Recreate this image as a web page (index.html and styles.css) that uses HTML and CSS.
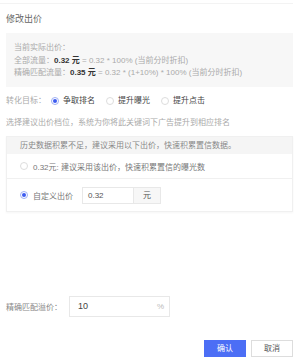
FILE: index.html
```html
<!DOCTYPE html>
<html>
<head>
<meta charset="utf-8">
<link rel="stylesheet" href="styles.css">
</head>
<body>
<div class="modal">
  <div class="topline"></div>
  <div class="title">修改出价</div>
  <div class="current">
    <div class="line">当前实际出价：</div>
    <div class="line">全部流量：<b>0.32 元</b> = 0.32 * 100% (当前分时折扣)</div>
    <div class="line">精确匹配流量：<b>0.35 元</b> = 0.32 * (1+10%) * 100% (当前分时折扣)</div>
  </div>
  <div class="goal">
    <span class="label">转化目标：</span>
    <span class="opt"><span class="radio on"></span><span class="dark">争取排名</span></span>
    <span class="opt"><span class="radio"></span><span class="dark">提升曝光</span></span>
    <span class="opt"><span class="radio"></span><span class="dark">提升点击</span></span>
  </div>
  <div class="hint">选择建议出价档位，系统为你将此关键词下广告提升到相应排名</div>
  <div class="options">
    <div class="ohead">历史数据积累不足，建议采用以下出价，快速积累置信数据。</div>
    <div class="orow">
      <span class="radio"></span><span class="dark2">0.32元: 建议采用该出价，快速积累置信的曝光数</span>
    </div>
    <div class="orow custom">
      <span class="radio on"></span><span class="dark2">自定义出价</span>
      <span class="inp"><span class="val">0.32</span><span class="unit">元</span></span>
    </div>
  </div>
  <div class="premium">
    <span class="label">精确匹配溢价：</span>
    <span class="pinp"><span class="val">10</span><span class="pct">%</span></span>
  </div>
  <div class="actions">
    <span class="btn primary">确认</span>
    <span class="btn">取消</span>
  </div>
</div>
</body>
</html>
```

FILE: styles.css
```css
html, body {
  margin: 0;
  padding: 0;
  background: #fff;
}
body {
  font-family: "Liberation Sans", "Noto Sans CJK SC", sans-serif;
  font-size: 8px;
  color: #999;
  width: 301px;
  height: 359px;
  overflow: hidden;
}
.modal {
  padding: 0 8px 0 6px;
}
.topline {
  margin: 3px -8px 0 -6px;
  width: 293px;
  border-top: 1px solid #f3f3f3;
}
.title {
  margin-top: 9px;
  height: 12px;
  line-height: 12px;
  font-size: 9px;
  color: #666;
}
.current {
  margin-top: 8px;
  background: #f7f7f7;
  padding: 9px 8px 8px;
  height: 37px;
}
.line {
  height: 12.5px;
  line-height: 12.5px;
  color: #aaa;
  white-space: nowrap;
}
.line b {
  color: #333;
  font-weight: bold;
}
.goal {
  margin-top: 8px;
  height: 12px;
  line-height: 12px;
  display: flex;
  align-items: center;
}
.goal .label {
  width: 45px;
  color: #aaa;
}
.opt {
  display: inline-flex;
  align-items: center;
  margin-right: 11px;
}
.dark { color: #444; margin-left: 4px; }
.dark2 { color: #777; margin-left: 5px; }
.radio {
  width: 6px;
  height: 6px;
  border: 1px solid #ddd;
  border-radius: 50%;
  box-sizing: content-box;
  display: inline-block;
  background: #fff;
  position: relative;
}
.radio.on {
  border-color: #9fb0f5;
}
.radio.on::after {
  content: "";
  position: absolute;
  left: 1px;
  top: 1px;
  width: 4px;
  height: 4px;
  border-radius: 50%;
  background: #3d5bf0;
}
.hint {
  margin-top: 10px;
  height: 12px;
  line-height: 12px;
  color: #aaa;
  white-space: nowrap;
}
.options {
  margin-top: 7px;
  border: 1px solid #f0f0f0;
  box-shadow: 0 1px 2px rgba(0,0,0,0.04);
}
.ohead {
  background: #f5f5f5;
  height: 17px;
  line-height: 17px;
  padding-left: 13px;
  color: #888;
}
.orow {
  display: flex;
  align-items: center;
  padding-left: 13px;
  height: 24px;
}
.orow + .orow {
  border-top: 1px solid #f0f0f0;
}
.orow.custom {
  height: 32px;
}
.inp {
  margin-left: 9px;
  display: inline-flex;
  border: 1px solid #e8e8e8;
  height: 15px;
  line-height: 15px;
}
.inp .val {
  width: 45px;
  padding-left: 5px;
  color: #555;
}
.inp .unit {
  width: 26px;
  text-align: center;
  background: #f7f7f7;
  border-left: 1px solid #e8e8e8;
  color: #555;
}
.premium {
  margin-top: 84px;
  display: flex;
  align-items: center;
}
.premium .label {
  width: 63px;
  color: #888;
}
.pinp {
  display: inline-flex;
  justify-content: space-between;
  width: 86px;
  height: 19px;
  line-height: 19px;
  border: 1px solid #e8e8e8;
  padding: 0 5px 0 8px;
}
.pinp .val { color: #444; font-size: 9px; }
.pinp .pct { color: #bbb; }
.actions {
  margin-top: 23px;
  display: flex;
  justify-content: flex-end;
  gap: 5px;
}
.btn {
  width: 40px;
  height: 15px;
  line-height: 15px;
  text-align: center;
  border: 1px solid #ddd;
  color: #555;
  box-sizing: content-box;
}
.btn.primary {
  background: #4c6ef5;
  border-color: #4c6ef5;
  color: #fff;
}
```
